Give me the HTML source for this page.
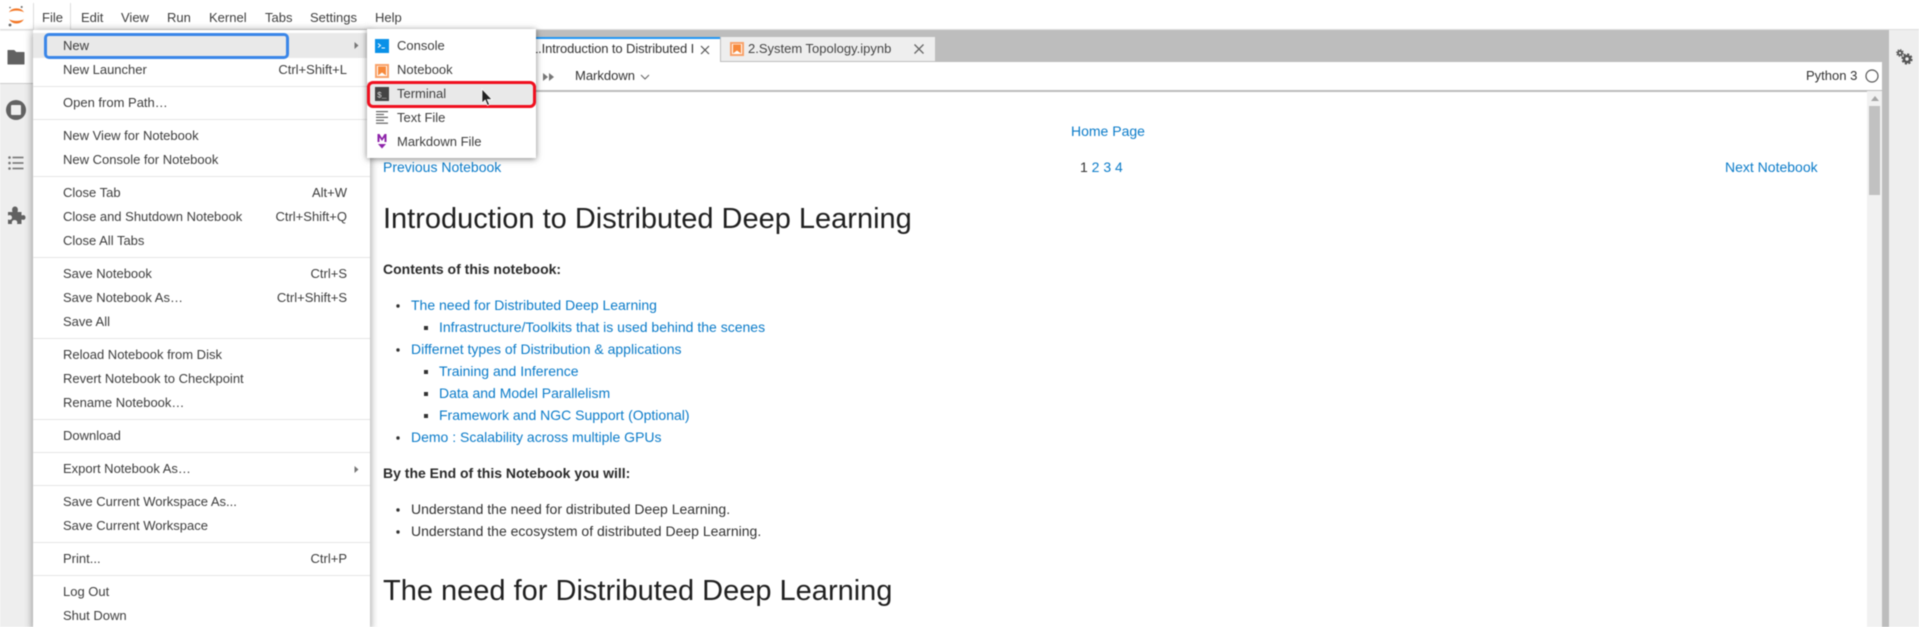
<!DOCTYPE html>
<html><head><meta charset="utf-8"><title>JupyterLab</title>
<style>
html,body{margin:0;padding:0;width:1919px;height:627px;overflow:hidden;background:#fff}
body{font-family:"Liberation Sans",Arial,sans-serif;font-size:13px;color:#3d3d3d;position:relative}
#w{position:absolute;left:0;top:0;width:1919px;height:627px;overflow:hidden;filter:blur(.5px)}
.a{position:absolute}
.t{position:absolute;white-space:nowrap;line-height:24px;height:24px}
.r{text-align:right}
.l{color:#0a7bc9;font-size:14px}
.k{font-size:14px;color:#333}
.sep{position:absolute;left:33px;width:337px;height:1px;background:#e6e6e6}
svg{position:absolute;overflow:visible}
</style></head><body><div id="w">

<!-- top bar -->
<div class="a" style="left:0;top:0;width:1919px;height:30px;background:#fff;border-bottom:1px solid #ddd;box-sizing:border-box"></div>
<div class="a" style="left:33px;top:3px;width:38px;height:28px;background:#fff;border-left:1px solid #ddd;border-right:1px solid #ddd;box-sizing:border-box"></div>
<svg style="left:0;top:0" width="33" height="30" viewBox="0 0 33 30">
<path d="M9 12.500C11 7 22 7 24 12.500C21 10 12 10 9 12.500Z" fill="#f37726"/>
<path d="M9 19C12 25 21 25 24 19C21 21.500 12 21.500 9 19Z" fill="#f37726"/>
<circle cx="21.700" cy="7" r="1" fill="#666"/><circle cx="10" cy="25" r="1.400" fill="#666"/><circle cx="10" cy="7.500" r=".8" fill="#666"/>
</svg>
<span class="t" style="left:42px;top:6px">File</span>
<span class="t" style="left:81px;top:6px">Edit</span>
<span class="t" style="left:121px;top:6px">View</span>
<span class="t" style="left:167px;top:6px">Run</span>
<span class="t" style="left:209px;top:6px">Kernel</span>
<span class="t" style="left:265px;top:6px">Tabs</span>
<span class="t" style="left:310px;top:6px">Settings</span>
<span class="t" style="left:375px;top:6px">Help</span>

<!-- left sidebar -->
<div class="a" style="left:0;top:30px;width:33px;height:597px;background:#eee"></div>
<div class="a" style="left:0;top:31px;width:33px;height:53px;background:#fff;border-bottom:1px solid #ccc;box-sizing:border-box"></div>
<svg style="left:7px;top:49px" width="18" height="16" viewBox="0 0 18 16"><path d="M1 1.500H7L9 3.500H17V15H1Z" fill="#616161" stroke="#616161" stroke-linejoin="round"/></svg>
<svg style="left:6px;top:100px" width="20" height="20" viewBox="0 0 20 20"><circle cx="10" cy="10" r="10" fill="#616161"/><rect x="5" y="5" width="10" height="10" rx="1" fill="#eee"/></svg>
<svg style="left:8px;top:156px" width="16" height="14" viewBox="0 0 16 14" fill="#757575"><circle cx="1.500" cy="1.500" r="1.300"/><circle cx="1.500" cy="7" r="1.300"/><circle cx="1.500" cy="12.500" r="1.300"/><rect x="4.500" y=".7" width="11" height="1.600"/><rect x="4.500" y="6.200" width="11" height="1.600"/><rect x="4.500" y="11.700" width="11" height="1.600"/></svg>
<svg style="left:7px;top:206px" width="19" height="19" viewBox="0 0 19 19"><path d="M1 6H5.500C4.500 3 5.500 .5 8 .5S11.500 3 10.500 6H14.500V9.500C17 8.500 18.500 9.500 18.500 11.500S17 14.500 14.500 13.500V18H10C11 15.500 9.500 14 7.500 14S4.500 15.500 5 18H1V13.500C3 14.500 5 13.500 5 11.500S3 8.500 1 9.500Z" fill="#616161"/></svg>

<!-- right sidebar -->
<div class="a" style="left:1889px;top:30px;width:30px;height:597px;background:#eee"></div>
<svg style="left:1896px;top:47px" width="18" height="18" viewBox="0 0 18 18" fill="none" stroke="#555">
<circle cx="4" cy="6" r="2" stroke-width="1.800"/>
<circle cx="4" cy="6" r="3.300" stroke-width="1.100" stroke-dasharray="1.300 1.300"/>
<circle cx="11" cy="12" r="3" stroke-width="2.600"/>
<circle cx="11" cy="12" r="4.800" stroke-width="1.600" stroke-dasharray="2.200 1.570"/>
</svg>

<!-- dock -->
<div class="a" style="left:33px;top:30px;width:1856px;height:597px;background:#bdbdbd"></div>
<div class="a" style="left:370px;top:62px;width:1512px;height:565px;background:#fff"></div>
<div class="a" style="left:370px;top:90px;width:1512px;height:1.500px;background:#bdbdbd"></div>

<!-- tabs -->
<div class="a" style="left:500px;top:37px;width:220px;height:25px;background:#fff;border-top:2px solid #2196f3;box-sizing:border-box"></div>
<span class="t" style="left:531px;top:37px;width:165px;overflow:hidden;color:#333;letter-spacing:-.1px">1.Introduction to Distributed I</span>
<svg style="left:699px;top:44px" width="12" height="12" viewBox="0 0 12 12"><path d="M2 2L10 10M10 2L2 10" stroke="#555" stroke-width="1.200"/></svg>
<div class="a" style="left:721px;top:37px;width:214px;height:24px;background:#eee"></div>
<svg style="left:730px;top:42px" width="14" height="14" viewBox="0 0 14 14"><rect width="14" height="14" fill="#f9a26a"/><rect x="2" y="2" width="10" height="10" fill="#fff"/><path d="M3 2.500H11V11.500L7 8.500L3 11.500Z" fill="#f7893b"/></svg>
<span class="t" style="left:748px;top:36.500px;color:#444">2.System Topology.ipynb</span>
<svg style="left:913px;top:43px" width="12" height="12" viewBox="0 0 12 12"><path d="M1.500 1.500L10.500 10.500M10.500 1.500L1.500 10.500" stroke="#666" stroke-width="1.300"/></svg>

<!-- toolbar -->
<svg style="left:543px;top:73px" width="11" height="8" viewBox="0 0 11 8" fill="#777"><path d="M0 0L5 4L0 8ZM6 0L11 4L6 8Z"/></svg>
<span class="t" style="left:575px;top:64px;color:#333">Markdown</span>
<svg style="left:640px;top:74px" width="10" height="6" viewBox="0 0 10 6"><path d="M1 1L5 5L9 1" fill="none" stroke="#666" stroke-width="1.100"/></svg>
<span class="t" style="left:1806px;top:64px;color:#333">Python 3</span>
<svg style="left:1865px;top:69px" width="14" height="14" viewBox="0 0 14 14"><circle cx="7" cy="7" r="6" fill="none" stroke="#555" stroke-width="1.200"/></svg>

<!-- scrollbar -->
<div class="a" style="left:1867px;top:91px;width:15px;height:536px;background:#f1f1f1"></div>
<svg style="left:1871px;top:96px" width="8" height="5" viewBox="0 0 8 5"><path d="M4 0L8 5H0Z" fill="#a5a5a5"/></svg>
<div class="a" style="left:1869px;top:106px;width:11px;height:89px;background:#c1c1c1"></div>

<!-- notebook content -->
<span class="t l" style="left:1071px;top:119px">Home Page</span>
<span class="t l" style="left:383px;top:155px">Previous Notebook</span>
<span class="t l" style="left:1080px;top:155px"><span style="color:#333">1</span> 2 3 4</span>
<span class="t l" style="left:1725px;top:155px">Next Notebook</span>
<span class="t" style="left:383px;top:201px;height:36px;line-height:36px;font-size:29px;color:#1f1f1f">Introduction to Distributed Deep Learning</span>
<span class="t" style="left:383px;top:257px;font-size:14px;font-weight:bold;color:#2a2a2a">Contents of this notebook:</span>
<svg style="left:0;top:0" width="1" height="1">
<g fill="#333"><circle cx="398" cy="306" r="1.700"/><circle cx="398" cy="350" r="1.700"/><circle cx="398" cy="438" r="1.700"/><circle cx="398" cy="510" r="1.700"/><circle cx="398" cy="532" r="1.700"/>
<rect x="424" y="326" width="4" height="4"/><rect x="424" y="370" width="4" height="4"/><rect x="424" y="392" width="4" height="4"/><rect x="424" y="414" width="4" height="4"/></g></svg>
<span class="t l" style="left:411px;top:293px">The need for Distributed Deep Learning</span>
<span class="t l" style="left:439px;top:315px">Infrastructure/Toolkits that is used behind the scenes</span>
<span class="t l" style="left:411px;top:337px">Differnet types of Distribution &amp; applications</span>
<span class="t l" style="left:439px;top:359px">Training and Inference</span>
<span class="t l" style="left:439px;top:381px">Data and Model Parallelism</span>
<span class="t l" style="left:439px;top:403px">Framework and NGC Support (Optional)</span>
<span class="t l" style="left:411px;top:425px">Demo : Scalability across multiple GPUs</span>
<span class="t" style="left:383px;top:461px;font-size:14px;font-weight:bold;color:#2a2a2a">By the End of this Notebook you will:</span>
<span class="t k" style="left:411px;top:497px">Understand the need for distributed Deep Learning.</span>
<span class="t k" style="left:411px;top:519px">Understand the ecosystem of distributed Deep Learning.</span>
<span class="t" style="left:383px;top:573px;height:36px;line-height:36px;font-size:29px;color:#1f1f1f">The need for Distributed Deep Learning</span>

<!-- File menu -->
<div class="a" style="left:33px;top:30px;width:337px;height:600px;background:#fff;box-shadow:0 1px 8px rgba(0,0,0,.45)"></div>
<div class="a" style="left:33px;top:33px;width:337px;height:25px;background:#e9e9e9"></div>
<div class="a" style="left:44px;top:32.500px;width:245px;height:26px;border:3.500px solid #3a86e8;border-radius:5px;box-sizing:border-box"></div>
<div class="sep" style="top:86px"></div><div class="sep" style="top:119px"></div><div class="sep" style="top:176px"></div><div class="sep" style="top:257px"></div><div class="sep" style="top:338px"></div><div class="sep" style="top:419px"></div><div class="sep" style="top:452px"></div><div class="sep" style="top:485px"></div><div class="sep" style="top:542px"></div><div class="sep" style="top:575px"></div>
<span class="t" style="left:63px;top:34px">New</span>
<svg style="left:354px;top:42px" width="5" height="7" viewBox="0 0 5 7"><path d="M.5 0L4.500 3.500L.5 7Z" fill="#777"/></svg>
<span class="t" style="left:63px;top:58px">New Launcher</span><span class="t r" style="right:1572px;top:58px">Ctrl+Shift+L</span>
<span class="t" style="left:63px;top:91px">Open from Path…</span>
<span class="t" style="left:63px;top:124px">New View for Notebook</span>
<span class="t" style="left:63px;top:148px">New Console for Notebook</span>
<span class="t" style="left:63px;top:181px">Close Tab</span><span class="t r" style="right:1572px;top:181px">Alt+W</span>
<span class="t" style="left:63px;top:205px">Close and Shutdown Notebook</span><span class="t r" style="right:1572px;top:205px">Ctrl+Shift+Q</span>
<span class="t" style="left:63px;top:229px">Close All Tabs</span>
<span class="t" style="left:63px;top:262px">Save Notebook</span><span class="t r" style="right:1572px;top:262px">Ctrl+S</span>
<span class="t" style="left:63px;top:286px">Save Notebook As…</span><span class="t r" style="right:1572px;top:286px">Ctrl+Shift+S</span>
<span class="t" style="left:63px;top:310px">Save All</span>
<span class="t" style="left:63px;top:343px">Reload Notebook from Disk</span>
<span class="t" style="left:63px;top:367px">Revert Notebook to Checkpoint</span>
<span class="t" style="left:63px;top:391px">Rename Notebook…</span>
<span class="t" style="left:63px;top:424px">Download</span>
<span class="t" style="left:63px;top:457px">Export Notebook As…</span>
<svg style="left:354px;top:466px" width="5" height="7" viewBox="0 0 5 7"><path d="M.5 0L4.500 3.500L.5 7Z" fill="#777"/></svg>
<span class="t" style="left:63px;top:490px">Save Current Workspace As...</span>
<span class="t" style="left:63px;top:514px">Save Current Workspace</span>
<span class="t" style="left:63px;top:547px">Print...</span><span class="t r" style="right:1572px;top:547px">Ctrl+P</span>
<span class="t" style="left:63px;top:580px">Log Out</span>
<span class="t" style="left:63px;top:604px">Shut Down</span>

<!-- New submenu -->
<div class="a" style="left:367px;top:29px;width:169px;height:129px;background:#fff;box-shadow:0 1px 6px rgba(0,0,0,.5)"></div>
<div class="a" style="left:367px;top:82px;width:167px;height:24px;background:#e9e9e9"></div>
<div class="a" style="left:366.500px;top:80.500px;width:169px;height:27px;border:3.500px solid #f0101f;border-radius:6px;box-sizing:border-box"></div>
<svg style="left:375px;top:39px" width="14" height="14" viewBox="0 0 14 14"><rect width="14" height="14" fill="#0a91e8"/><path d="M3 4.500L5.500 6.500L3 8.500M6.500 9H10" fill="none" stroke="#fff" stroke-width="1"/></svg>
<svg style="left:375px;top:64px" width="14" height="14" viewBox="0 0 14 14"><rect width="14" height="14" fill="#f9a26a"/><rect x="2" y="2" width="10" height="10" fill="#fff"/><path d="M3 2.500H11V11.500L7 8.500L3 11.500Z" fill="#f7893b"/></svg>
<svg style="left:375px;top:87px" width="14" height="14" viewBox="0 0 14 14"><rect width="14" height="14" fill="#444"/><text x="2" y="10.500" font-family="Liberation Mono,monospace" font-size="8" fill="#ddd">$_</text></svg>
<svg style="left:376px;top:111px" width="13" height="13" viewBox="0 0 13 13" fill="#616161"><rect width="12" height="1.200"/><rect y="2.900" width="8" height="1.200"/><rect y="5.800" width="12" height="1.200"/><rect y="8.700" width="8" height="1.200"/><rect y="11.600" width="12" height="1.200"/></svg>
<svg style="left:376px;top:134px" width="12" height="15" viewBox="0 0 12 15" fill="#8e24aa"><path d="M1.500 0H3.500L6 4L8.500 0H10.500V8H8.500V3.500L6 7L3.500 3.500V8H1.500Z"/><path d="M2 10H10L6 14.500Z"/></svg>
<span class="t" style="left:397px;top:34px">Console</span>
<span class="t" style="left:397px;top:58px">Notebook</span>
<span class="t" style="left:397px;top:81.500px">Terminal</span>
<span class="t" style="left:397px;top:105.500px">Text File</span>
<span class="t" style="left:397px;top:130px">Markdown File</span>
<svg style="left:481px;top:89px" width="12" height="18" viewBox="0 0 12 18"><path d="M1 0V14L4.200 11L6.500 16.500L8.500 15.500L6.300 10.500H11Z" fill="#222" stroke="#fff" stroke-width=".7"/></svg>

</div></body></html>
